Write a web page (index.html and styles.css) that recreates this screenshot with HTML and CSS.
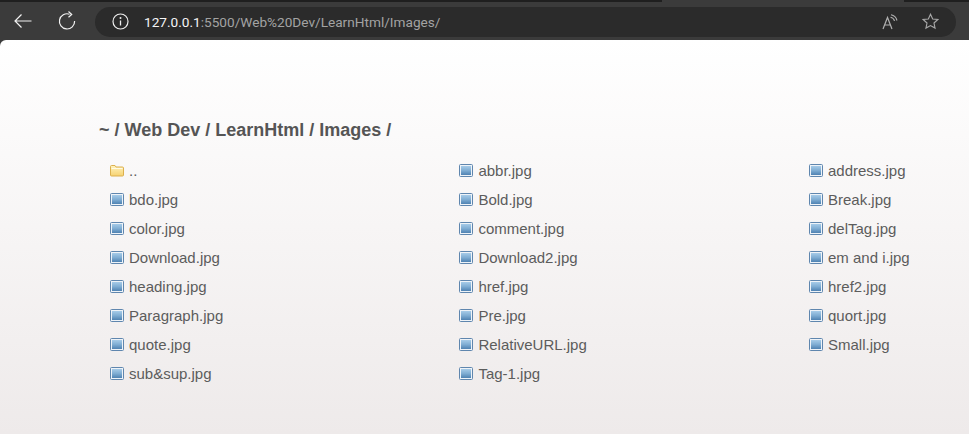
FILE: index.html
```html
<!DOCTYPE html>
<html lang="en">
<head>
<meta charset="utf-8">
<title>Images</title>
<link rel="stylesheet" href="styles.css">
</head>
<body>
<svg class="sprites" width="0" height="0" aria-hidden="true">
  <defs>
    <linearGradient id="pic" x1="0" y1="0" x2="0" y2="1"><stop offset="0" stop-color="#a6cbe8"/><stop offset="0.5" stop-color="#7fadd3"/><stop offset="1" stop-color="#4f82b2"/></linearGradient>
    <linearGradient id="fold" x1="0" y1="0" x2="0" y2="1"><stop offset="0" stop-color="#fff3bf"/><stop offset="1" stop-color="#f6d271"/></linearGradient>
    <symbol id="file" viewBox="0 0 14 13">
      <rect x="0.5" y="0.5" width="13" height="12" rx="1" fill="#eef3f8" stroke="#5f86ae"/>
      <rect x="2" y="2" width="10" height="9" fill="url(#pic)"/>
    </symbol>
    <symbol id="folder" viewBox="0 0 14 13">
      <path d="M0.5 2.500a1 1 0 0 1 1-1h3.500l1 1.500h6.500a1 1 0 0 1 1 1v7a1 1 0 0 1-1 1h-11a1 1 0 0 1-1-1z" fill="url(#fold)" stroke="#dcb04e"/>
      <path d="M1.500 4.500h11" stroke="#fffbe6"/>
    </symbol>
  </defs>
</svg>
<header class="toolbar">
  <svg class="nav back" width="20" height="20" viewBox="0 0 20 20"><path d="M18.500 10H2M8.500 3.500L2 10l6.500 6.500" fill="none" stroke="#f2f2f2" stroke-width="1.200"/></svg>
  <svg class="nav reload" width="20" height="20" viewBox="0 0 20 20"><path d="M12.500 3.200A7.600 7.600 0 1 0 17.600 10" fill="none" stroke="#f2f2f2" stroke-width="1.200"/><path d="M11.500 .5l3.200 3-3.200 2.800" fill="none" stroke="#f2f2f2" stroke-width="1.200"/></svg>
  <div class="address">
    <svg class="info" width="17" height="17" viewBox="0 0 17 17"><circle cx="8.500" cy="8.500" r="7.500" fill="none" stroke="#eee" stroke-width="1.200"/><path d="M8.500 7.500v5" stroke="#eee" stroke-width="1.300"/><circle cx="8.500" cy="5" r="1" fill="#eee"/></svg>
    <span class="url"><b class="host">127.0.0.1</b>:5500/Web%20Dev/LearnHtml/Images/</span>
    <svg class="read" width="16" height="16" viewBox="0 0 16 16"><path d="M1 15L5.500 3.500 10 15M2.500 11h6" fill="none" stroke="#b0b0b0" stroke-width="1.200"/><path d="M8.500 3.200a5 5 0 0 1 4 3.800M9 .8a8 8 0 0 1 6 5.700" fill="none" stroke="#b0b0b0" stroke-width="1.100"/></svg>
    <svg class="star" width="17" height="17" viewBox="0 0 18 18"><path d="M9 1.300l2.300 5 5.400.6-4 3.700 1.100 5.400L9 13.300 4.200 16l1.100-5.400-4-3.700 5.400-.6z" fill="none" stroke="#a8a8a8" stroke-width="1.200"/></svg>
  </div>
</header>
<main class="page">
  <h1 class="crumbs">~ / Web Dev / LearnHtml / Images /</h1>
  <ul class="files">
    <li class="entry"><svg class="ico"><use href="#folder"/></svg><a class="name">..</a></li>
    <li class="entry"><svg class="ico"><use href="#file"/></svg><a class="name">abbr.jpg</a></li>
    <li class="entry"><svg class="ico"><use href="#file"/></svg><a class="name">address.jpg</a></li>
    <li class="entry"><svg class="ico"><use href="#file"/></svg><a class="name">bdo.jpg</a></li>
    <li class="entry"><svg class="ico"><use href="#file"/></svg><a class="name">Bold.jpg</a></li>
    <li class="entry"><svg class="ico"><use href="#file"/></svg><a class="name">Break.jpg</a></li>
    <li class="entry"><svg class="ico"><use href="#file"/></svg><a class="name">color.jpg</a></li>
    <li class="entry"><svg class="ico"><use href="#file"/></svg><a class="name">comment.jpg</a></li>
    <li class="entry"><svg class="ico"><use href="#file"/></svg><a class="name">delTag.jpg</a></li>
    <li class="entry"><svg class="ico"><use href="#file"/></svg><a class="name">Download.jpg</a></li>
    <li class="entry"><svg class="ico"><use href="#file"/></svg><a class="name">Download2.jpg</a></li>
    <li class="entry"><svg class="ico"><use href="#file"/></svg><a class="name">em and i.jpg</a></li>
    <li class="entry"><svg class="ico"><use href="#file"/></svg><a class="name">heading.jpg</a></li>
    <li class="entry"><svg class="ico"><use href="#file"/></svg><a class="name">href.jpg</a></li>
    <li class="entry"><svg class="ico"><use href="#file"/></svg><a class="name">href2.jpg</a></li>
    <li class="entry"><svg class="ico"><use href="#file"/></svg><a class="name">Paragraph.jpg</a></li>
    <li class="entry"><svg class="ico"><use href="#file"/></svg><a class="name">Pre.jpg</a></li>
    <li class="entry"><svg class="ico"><use href="#file"/></svg><a class="name">quort.jpg</a></li>
    <li class="entry"><svg class="ico"><use href="#file"/></svg><a class="name">quote.jpg</a></li>
    <li class="entry"><svg class="ico"><use href="#file"/></svg><a class="name">RelativeURL.jpg</a></li>
    <li class="entry"><svg class="ico"><use href="#file"/></svg><a class="name">Small.jpg</a></li>
    <li class="entry"><svg class="ico"><use href="#file"/></svg><a class="name">sub&amp;sup.jpg</a></li>
    <li class="entry"><svg class="ico"><use href="#file"/></svg><a class="name">Tag-1.jpg</a></li>
  </ul>
</main>
</body>
</html>
```
FILE: styles.css
```css
* { box-sizing: border-box; }
html, body { height: 100%; }
body {
  margin: 0;
  overflow: hidden;
  display: flex;
  flex-direction: column;
  background: #3b3b3b;
  font-family: "Liberation Sans", Arial, sans-serif;
}
.sprites { display: block; height: 0; }
.toolbar {
  flex: none;
  height: 40px;
  display: flex;
  align-items: center;
  padding: 2px 13px 0 13px;
  background: linear-gradient(90deg, #1f1f1f 662px, #3b3b3b 662px, #3b3b3b 904px, #1f1f1f 904px) top / 100% 2px no-repeat #3b3b3b;
}
.nav { flex: none; }
.back { margin-right: 24px; }
.reload { margin-right: 18px; }
.address {
  flex: 1;
  height: 30px;
  margin-top: 1px;
  display: flex;
  align-items: center;
  padding: 0 17px 0 17px;
  border-radius: 15px;
  background: #2b2b2b;
}
.info { flex: none; margin-right: 15px; }
.url {
  flex: 1;
  font: 13.630px Roboto, sans-serif;
  color: #a3a3a3;
  white-space: nowrap;
}
.host { font-weight: 400; color: #f5f5f5; }
.read { flex: none; margin-right: 24px; }
.star { flex: none; }
.page {
  flex: 1;
  padding: 79px 0 0 99px;
  border-radius: 6px 0 0 0;
  background: linear-gradient(#fff, #eeeaea);
  color: #555;
}
.crumbs {
  margin: 0 0 15px;
  font-size: 18px;
  line-height: 22px;
  font-weight: 700;
  color: #555;
}
.files {
  list-style: none;
  margin: 0;
  padding: 0 0 0 11px;
  display: grid;
  grid-template-columns: 349.400px 349.600px 1fr;
  grid-auto-rows: 29px;
}
.entry {
  display: flex;
  align-items: center;
  font-size: 15px;
}
.ico { flex: none; width: 14px; height: 13px; margin-right: 5px; }
.name { color: #5c5c5c; white-space: nowrap; }
```
